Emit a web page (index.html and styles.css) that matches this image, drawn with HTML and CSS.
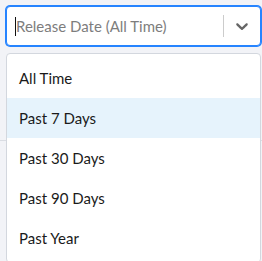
FILE: index.html
```html
<!DOCTYPE html>
<html lang="en">
<head>
  <meta charset="UTF-8" />
  <meta name="viewport" content="width=device-width, initial-scale=1.0" />
  <title>Release Date Filter</title>
  <link rel="stylesheet" href="styles.css">
</head>
<body>

<div class="select">
  <!-- Control -->
  <div class="control">
    <div class="value">
      <span class="caret"></span>
      <span class="placeholder">Release Date (All Time)</span>
    </div>
    <div class="indicators">
      <span class="separator"></span>
      <div class="dropdown-indicator">
        <svg width="20" height="20" viewBox="0 0 20 20" aria-hidden="true">
          <path d="M4.516 7.548c0.436-0.446 1.043-0.481 1.576 0l3.908 3.747 3.908-3.747c0.533-0.481 1.141-0.446 1.574 0 0.436 0.445 0.408 1.197 0 1.615-0.406 0.418-4.695 4.502-4.695 4.502-0.217 0.223-0.502 0.335-0.787 0.335s-0.57-0.112-0.789-0.335c0 0-4.287-4.084-4.695-4.502s-0.436-1.17 0-1.615z"></path>
        </svg>
      </div>
    </div>
  </div>

  <!-- Menu -->
  <ul class="menu">
    <li class="option">All Time</li>
    <li class="option focused">Past 7 Days</li>
    <li class="option">Past 30 Days</li>
    <li class="option">Past 90 Days</li>
    <li class="option">Past Year</li>
  </ul>
</div>

</body>
</html>
```

FILE: styles.css
```css
* {
  margin: 0;
  padding: 0;
  box-sizing: border-box;
  font-family: Lato, 'Liberation Sans', sans-serif;
}

body {
  background: linear-gradient(transparent 140px, #dadde3 140px, #dadde3 141px, transparent 141px), #f2f3f7;
  color: #222;
  height: 261px;
  overflow: hidden;
}

.select {
  padding: 6px 1px 0 6px;
}

.control {
  display: flex;
  align-items: center;
  height: 40px;
  background: #fff;
  border: 1px solid #2684ff;
  border-radius: 4px;
  box-shadow: 0 0 0 1px #2684ff;
}

.value {
  flex: 1;
  position: relative;
  display: flex;
  align-items: center;
  padding: 0 9px;
}

.caret {
  position: absolute;
  left: 8px;
  top: 50%;
  width: 1px;
  height: 19px;
  margin-top: -9px;
  background: #111;
}

.placeholder {
  color: #7d7d7d;
  font-size: 15px;
}

.indicators {
  display: flex;
  align-items: center;
  align-self: stretch;
}

.separator {
  width: 1px;
  align-self: stretch;
  margin: 8px 0;
  background: #ccc;
}

.dropdown-indicator {
  display: flex;
  padding: 8px;
}

.dropdown-indicator svg {
  fill: #666;
}

.menu {
  list-style: none;
  margin-top: 7px;
  padding: 4px 0;
  background: #fff;
  border: 1px solid #d3d7de;
  border-radius: 4px;
}

.option {
  height: 40px;
  padding: 0 12px;
  display: flex;
  align-items: center;
  font-size: 15px;
  color: #1a1a1a;
}

.option.focused {
  background: #e6f3fc;
}
```
